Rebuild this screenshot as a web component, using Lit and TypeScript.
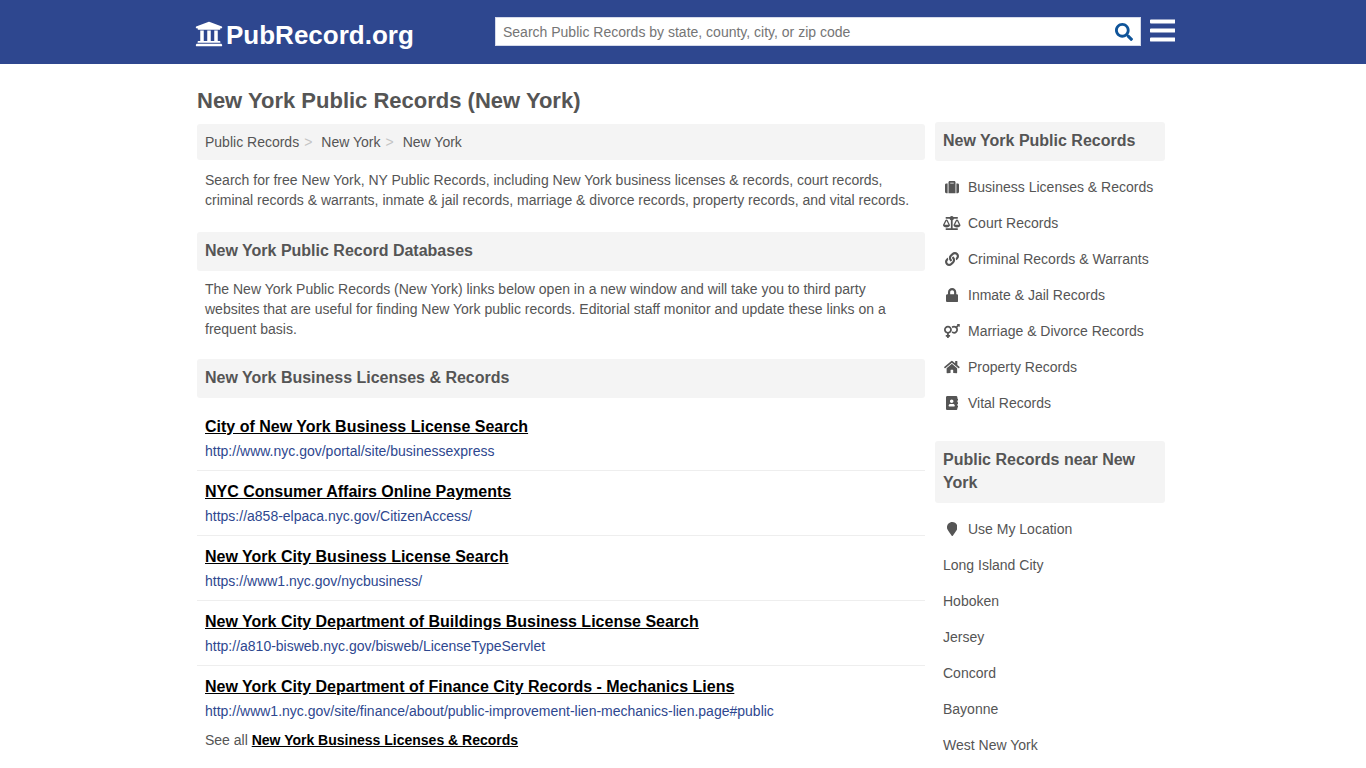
import { LitElement, html, css, svg, nothing } from "lit";
import { customElement, property } from "lit/decorators.js";

const ICONS: Record<string, [number, string]> = {
  university: [512, "M496 128v16a8 8 0 0 1-8 8h-24v12c0 6.627-5.373 12-12 12H60c-6.627 0-12-5.373-12-12v-12H24a8 8 0 0 1-8-8v-16a8 8 0 0 1 4.941-7.392l232-88a7.996 7.996 0 0 1 6.118 0l232 88A8 8 0 0 1 496 128zm-24 304H40c-13.255 0-24 10.745-24 24v16a8 8 0 0 0 8 8h464a8 8 0 0 0 8-8v-16c0-13.255-10.745-24-24-24zM96 192v192H60c-6.627 0-12 5.373-12 12v20h416v-20c0-6.627-5.373-12-12-12h-36V192h-64v192h-64V192h-64v192h-64V192H96z"],
  search: [512, "M505 442.7L405.3 343c-4.5-4.5-10.6-7-17-7H372c27.6-35.3 44-79.7 44-128C416 93.1 322.9 0 208 0S0 93.1 0 208s93.1 208 208 208c48.3 0 92.7-16.4 128-44v16.3c0 6.4 2.5 12.5 7 17l99.7 99.7c9.4 9.4 24.6 9.4 33.9 0l28.3-28.3c9.4-9.4 9.4-24.6.1-34zM208 336c-70.7 0-128-57.2-128-128 0-70.7 57.2-128 128-128 70.7 0 128 57.2 128 128 0 70.7-57.2 128-128 128z"],
  bars: [448, "M16 132h416c8.837 0 16-7.163 16-16V76c0-8.837-7.163-16-16-16H16C7.163 60 0 67.163 0 76v40c0 8.837 7.163 16 16 16zm0 160h416c8.837 0 16-7.163 16-16v-40c0-8.837-7.163-16-16-16H16c-8.837 0-16 7.163-16 16v40c0 8.837 7.163 16 16 16zm0 160h416c8.837 0 16-7.163 16-16v-40c0-8.837-7.163-16-16-16H16c-8.837 0-16 7.163-16 16v40c0 8.837 7.163 16 16 16z"],
  suitcase: [512, "M128 480h256V80c0-26.5-21.5-48-48-48H176c-26.5 0-48 21.5-48 48v400zm64-384h128v32H192V96zm320 80v256c0 26.5-21.5 48-48 48h-48V128h48c26.5 0 48 21.5 48 48zM96 480H48c-26.5 0-48-21.5-48-48V176c0-26.5 21.5-48 48-48h48v352z"],
  scale: [640, "M256 336h-.02c0-16.18 1.34-8.73-85.05-181.51-17.65-35.29-68.19-35.36-85.87 0C-2.06 328.75.02 320.33.02 336H0c0 44.18 57.31 80 128 80s128-35.82 128-80zM128 176l72 144H56l72-144zm511.98 160c0-16.18 1.34-8.73-85.05-181.51-17.65-35.29-68.19-35.36-85.87 0-87.12 174.26-85.04 165.84-85.04 181.51H384c0 44.18 57.31 80 128 80s128-35.82 128-80h-.02zM440 320l72-144 72 144H440zm88 128H352V153.25c23.51-10.29 41.16-31.48 46.39-57.25H528c8.84 0 16-7.16 16-16V48c0-8.84-7.16-16-16-16H383.64C369.04 12.68 346.09 0 320 0s-49.04 12.68-63.64 32H112c-8.84 0-16 7.16-16 16v32c0 8.84 7.16 16 16 16h129.61c5.23 25.76 22.87 46.96 46.39 57.25V448H112c-8.84 0-16 7.16-16 16v32c0 8.84 7.16 16 16 16h416c8.84 0 16-7.16 16-16v-32c0-8.84-7.16-16-16-16z"],
  link: [512, "M326.612 185.391c59.747 59.809 58.927 155.698.36 214.59-.11.12-.24.25-.36.37l-67.2 67.2c-59.27 59.27-155.699 59.262-214.96 0-59.27-59.26-59.27-155.7 0-214.96l37.106-37.106c9.84-9.84 26.786-3.3 27.294 10.606.648 17.722 3.826 35.527 9.69 52.721 1.986 5.822.567 12.262-3.783 16.612l-13.087 13.087c-28.026 28.026-28.905 73.66-1.155 101.96 28.024 28.579 74.086 28.749 102.325.51l67.2-67.19c28.191-28.191 28.073-73.757 0-101.83-3.701-3.694-7.429-6.564-10.341-8.569a16.037 16.037 0 0 1-6.947-12.606c-.396-10.567 3.348-21.456 11.698-29.806l21.054-21.055c5.521-5.521 14.182-6.199 20.584-1.731a152.482 152.482 0 0 1 20.522 17.197zM467.547 44.449c-59.261-59.262-155.69-59.27-214.96 0l-67.2 67.2c-.12.12-.25.25-.36.37-58.566 58.892-59.387 154.781.36 214.59a152.454 152.454 0 0 0 20.521 17.196c6.402 4.468 15.064 3.789 20.584-1.731l21.054-21.055c8.35-8.35 12.094-19.239 11.698-29.806a16.037 16.037 0 0 0-6.947-12.606c-2.912-2.005-6.64-4.875-10.341-8.569-28.073-28.073-28.191-73.639 0-101.83l67.2-67.19c28.239-28.239 74.3-28.069 102.325.51 27.75 28.3 26.872 73.934-1.155 101.96l-13.087 13.087c-4.35 4.35-5.769 10.79-3.783 16.612 5.864 17.194 9.042 34.999 9.69 52.721.509 13.906 17.454 20.446 27.294 10.606l37.106-37.106c59.271-59.259 59.271-155.699.001-214.959z"],
  lock: [448, "M400 224h-24v-72C376 68.2 307.8 0 224 0S72 68.2 72 152v72H48c-26.5 0-48 21.5-48 48v192c0 26.5 21.5 48 48 48h352c26.5 0 48-21.5 48-48V272c0-26.5-21.5-48-48-48zm-104 0H152v-72c0-39.7 32.3-72 72-72s72 32.3 72 72v72z"],
  venusMars: [576, "M564 0h-79c-10.7 0-16 12.9-8.5 20.5l16.9 16.9-48.7 48.7C422.5 72.1 396.2 64 368 64c-33.7 0-64.6 11.6-89.2 30.9 14 16.7 25 36 32.1 57.1 14.5-14.8 34.7-24 57.1-24 44.1 0 80 35.9 80 80s-35.9 80-80 80c-22.3 0-42.6-9.2-57.1-24-7.1 21.1-18 40.4-32.1 57.1 24.5 19.4 55.5 30.9 89.2 30.9 79.5 0 144-64.5 144-144 0-28.2-8.1-54.5-22.1-76.7l48.7-48.7 16.9 16.9c2.4 2.4 5.5 3.5 8.4 3.5 6.2 0 12.1-4.8 12.1-12V12c0-6.6-5.4-12-12-12zM144 64C64.5 64 0 128.5 0 208c0 68.5 47.9 125.9 112 140.4V400H76c-6.6 0-12 5.4-12 12v40c0 6.6 5.4 12 12 12h36v36c0 6.6 5.4 12 12 12h40c6.6 0 12-5.4 12-12v-36h36c6.6 0 12-5.4 12-12v-40c0-6.6-5.4-12-12-12h-36v-51.6c64.1-14.6 112-71.9 112-140.4 0-79.5-64.5-144-144-144zm0 224c-44.1 0-80-35.9-80-80s35.9-80 80-80 80 35.9 80 80-35.9 80-80 80z"],
  home: [576, "M280.37 148.26L96 300.11V464a16 16 0 0 0 16 16l112.06-.29a16 16 0 0 0 15.92-16V368a16 16 0 0 1 16-16h64a16 16 0 0 1 16 16v95.64a16 16 0 0 0 16 16.05L464 480a16 16 0 0 0 16-16V300L295.67 148.26a12.19 12.19 0 0 0-15.3 0zM571.6 251.47L488 182.56V44.05a12 12 0 0 0-12-12h-56a12 12 0 0 0-12 12v72.61L318.47 43a48 48 0 0 0-61 0L4.34 251.47a12 12 0 0 0-1.6 16.9l25.5 31A12 12 0 0 0 45.15 301l235.22-193.74a12.19 12.19 0 0 1 15.3 0L530.9 301a12 12 0 0 0 16.9-1.6l25.5-31a12 12 0 0 0-1.7-16.93z"],
  book: [448, "M436 160c6.6 0 12-5.4 12-12v-40c0-6.6-5.4-12-12-12h-20V48c0-26.5-21.5-48-48-48H48C21.5 0 0 21.5 0 48v416c0 26.5 21.5 48 48 48h320c26.5 0 48-21.5 48-48v-48h20c6.6 0 12-5.4 12-12v-40c0-6.6-5.4-12-12-12h-20v-64h20c6.6 0 12-5.4 12-12v-40c0-6.6-5.4-12-12-12h-20v-64h20zm-228-32c35.3 0 64 28.7 64 64s-28.7 64-64 64-64-28.7-64-64 28.7-64 64-64zm112 236.8c0 10.6-10 19.2-22.4 19.2H118.4C106 384 96 375.4 96 364.8v-19.2c0-31.8 30.1-57.6 67.2-57.6h5c12.3 5.1 25.7 8 39.8 8s27.6-2.9 39.8-8h5c37.1 0 67.2 25.8 67.2 57.6v19.2z"],
  marker: [384, "M172.268 501.67C26.97 291.031 0 269.413 0 192 0 85.961 85.961 0 192 0s192 85.961 192 192c0 77.413-26.97 99.031-172.268 309.67-9.535 13.774-29.93 13.773-39.464 0z"],
};

@customElement("pr-icon")
class PrIcon extends LitElement {
  @property() name = "";

  static styles = css`
    :host { display: inline-flex; justify-content: center; align-items: center; flex: none; }
    .glyph { display: block; height: 1em; width: auto; fill: currentColor; }
  `;

  render() {
    const icon = ICONS[this.name];
    if (!icon) return nothing;
    return html`<svg class="glyph" viewBox="0 0 ${icon[0]} 512" aria-hidden="true">${svg`<path d=${icon[1]}></path>`}</svg>`;
  }
}

const CATEGORIES = [
  ["suitcase", "Business Licenses & Records"],
  ["scale", "Court Records"],
  ["link", "Criminal Records & Warrants"],
  ["lock", "Inmate & Jail Records"],
  ["venusMars", "Marriage & Divorce Records"],
  ["home", "Property Records"],
  ["book", "Vital Records"],
];

const NEARBY = ["Long Island City", "Hoboken", "Jersey", "Concord", "Bayonne", "West New York"];

const LISTINGS = [
  ["City of New York Business License Search", "http://www.nyc.gov/portal/site/businessexpress"],
  ["NYC Consumer Affairs Online Payments", "https://a858-elpaca.nyc.gov/CitizenAccess/"],
  ["New York City Business License Search", "https://www1.nyc.gov/nycbusiness/"],
  ["New York City Department of Buildings Business License Search", "http://a810-bisweb.nyc.gov/bisweb/LicenseTypeServlet"],
  ["New York City Department of Finance City Records - Mechanics Liens", "http://www1.nyc.gov/site/finance/about/public-improvement-lien-mechanics-lien.page#public"],
];

@customElement("app-root")
class AppRoot extends LitElement {
  static styles = css`
    :host {
      display: block;
      background: #fff;
      color: #555;
      font: 14px/20px "Liberation Sans", Arial, sans-serif;
    }
    * { box-sizing: border-box; }
    h1, h2, h3, p, ul, ol { margin: 0; padding: 0; }
    ul, ol { list-style: none; }
    a { color: inherit; text-decoration: none; }

    .bar { background: #2e478f; }
    .bar-inner {
      display: flex;
      align-items: center;
      max-width: 984px;
      height: 64px;
      margin: 0 auto;
      padding: 0 0 1px 4px;
    }
    .logo {
      display: flex;
      align-items: center;
      gap: 3px;
      width: 300px;
      padding-top: 7px;
      color: #fff;
      font-size: 26px;
      line-height: 30px;
      font-weight: bold;
    }
    .logo-icon { font-size: 28px; padding-bottom: 3px; }
    .search {
      display: flex;
      flex: 1;
      height: 29px;
      background: #fff;
      border: 1px solid #d5daea;
    }
    .query {
      flex: 1;
      min-width: 0;
      padding: 1px 7px 0;
      border: 0;
      outline: 0;
      background: none;
      color: #555;
      font: inherit;
    }
    .query::placeholder { color: #757575; opacity: 1; }
    .icon-button {
      display: flex;
      align-items: center;
      padding: 0;
      border: 0;
      background: none;
      cursor: pointer;
    }
    .submit { padding: 1px 7px 0; color: #0f5499; font-size: 18px; }
    .menu { margin-left: 9px; color: #fff; font-size: 29px; padding-bottom: 2px; }

    .page {
      display: grid;
      grid-template-columns: minmax(0, 1fr) 230px;
      column-gap: 10px;
      max-width: 972px;
      margin: 0 auto;
      padding: 24px 4px 16px 0;
    }
    .title {
      grid-column: 1 / -1;
      font-size: 22px;
      line-height: 26px;
    }
    .main { padding-top: 10px; }
    .side { padding-top: 8px; }
    .crumbs {
      display: flex;
      padding: 8px;
      background: #f4f4f4;
      border-radius: 3px;
    }
    .crumb + .crumb::before {
      content: ">";
      padding: 0 9px 0 5px;
      color: #c4c4c4;
    }
    .text { padding: 8px 8px 0; }
    .intro { padding: 2px 0; }
    .heading {
      padding: 7px 8px 9px;
      background: #f4f4f4;
      border-radius: 3px;
      font-size: 16px;
      line-height: 23px;
      font-weight: bold;
    }
    .main .heading { margin-top: 20px; }
    .listings { padding-top: 8px; }
    .listing { padding: 11px 8px 9px; }
    .listing + .listing { border-top: 1px solid #eee; }
    .listing-title {
      color: #000;
      font-size: 16px;
      line-height: 20px;
      font-weight: bold;
    }
    .listing-title a, .all a { text-decoration: underline; }
    .listing-url { margin-top: 4px; color: #2e478f; }
    .all { padding: 0 8px; }
    .all a { color: #000; font-weight: bold; }

    .side-list { padding: 8px 0 20px; }
    .side-link {
      display: flex;
      align-items: center;
      gap: 7px;
      padding: 8px;
    }
    .side-icon { width: 18px; }
  `;

  render() {
    return html`
      <header class="bar">
        <div class="bar-inner">
          <a class="logo" href="#"><pr-icon class="logo-icon" name="university"></pr-icon>PubRecord.org</a>
          <form class="search" role="search">
            <input class="query" type="text" aria-label="Search Public Records"
              placeholder="Search Public Records by state, county, city, or zip code">
            <button class="icon-button submit" type="submit" aria-label="Search"><pr-icon name="search"></pr-icon></button>
          </form>
          <button class="icon-button menu" type="button" aria-label="Menu"><pr-icon name="bars"></pr-icon></button>
        </div>
      </header>
      <div class="page">
        <h1 class="title">New York Public Records (New York)</h1>
        <main class="main">
          <ol class="crumbs">
            ${["Public Records", "New York", "New York"].map((c) => html`<li class="crumb"><a href="#">${c}</a></li>`)}
          </ol>
          <div class="intro">
            <p class="text">Search for free New York, NY Public Records, including New York business licenses &amp; records, court records, criminal records &amp; warrants, inmate &amp; jail records, marriage &amp; divorce records, property records, and vital records.</p>
          </div>
          <h2 class="heading">New York Public Record Databases</h2>
          <p class="text">The New York Public Records (New York) links below open in a new window and will take you to third party websites that are useful for finding New York public records. Editorial staff monitor and update these links on a frequent basis.</p>
          <h2 class="heading">New York Business Licenses &amp; Records</h2>
          <ul class="listings">
            ${LISTINGS.map(([title, url]) => html`
              <li class="listing">
                <h3 class="listing-title"><a href=${url}>${title}</a></h3>
                <p class="listing-url">${url}</p>
              </li>`)}
          </ul>
          <p class="all">See all <a href="#">New York Business Licenses &amp; Records</a></p>
        </main>
        <aside class="side">
          <h2 class="heading">New York Public Records</h2>
          <ul class="side-list">
            ${CATEGORIES.map(([icon, label]) => html`
              <li><a class="side-link" href="#"><pr-icon class="side-icon" name=${icon}></pr-icon>${label}</a></li>`)}
          </ul>
          <h2 class="heading">Public Records near New York</h2>
          <ul class="side-list">
            <li><a class="side-link" href="#"><pr-icon class="side-icon" name="marker"></pr-icon>Use My Location</a></li>
            ${NEARBY.map((place) => html`<li><a class="side-link" href="#">${place}</a></li>`)}
          </ul>
        </aside>
      </div>
    `;
  }
}
